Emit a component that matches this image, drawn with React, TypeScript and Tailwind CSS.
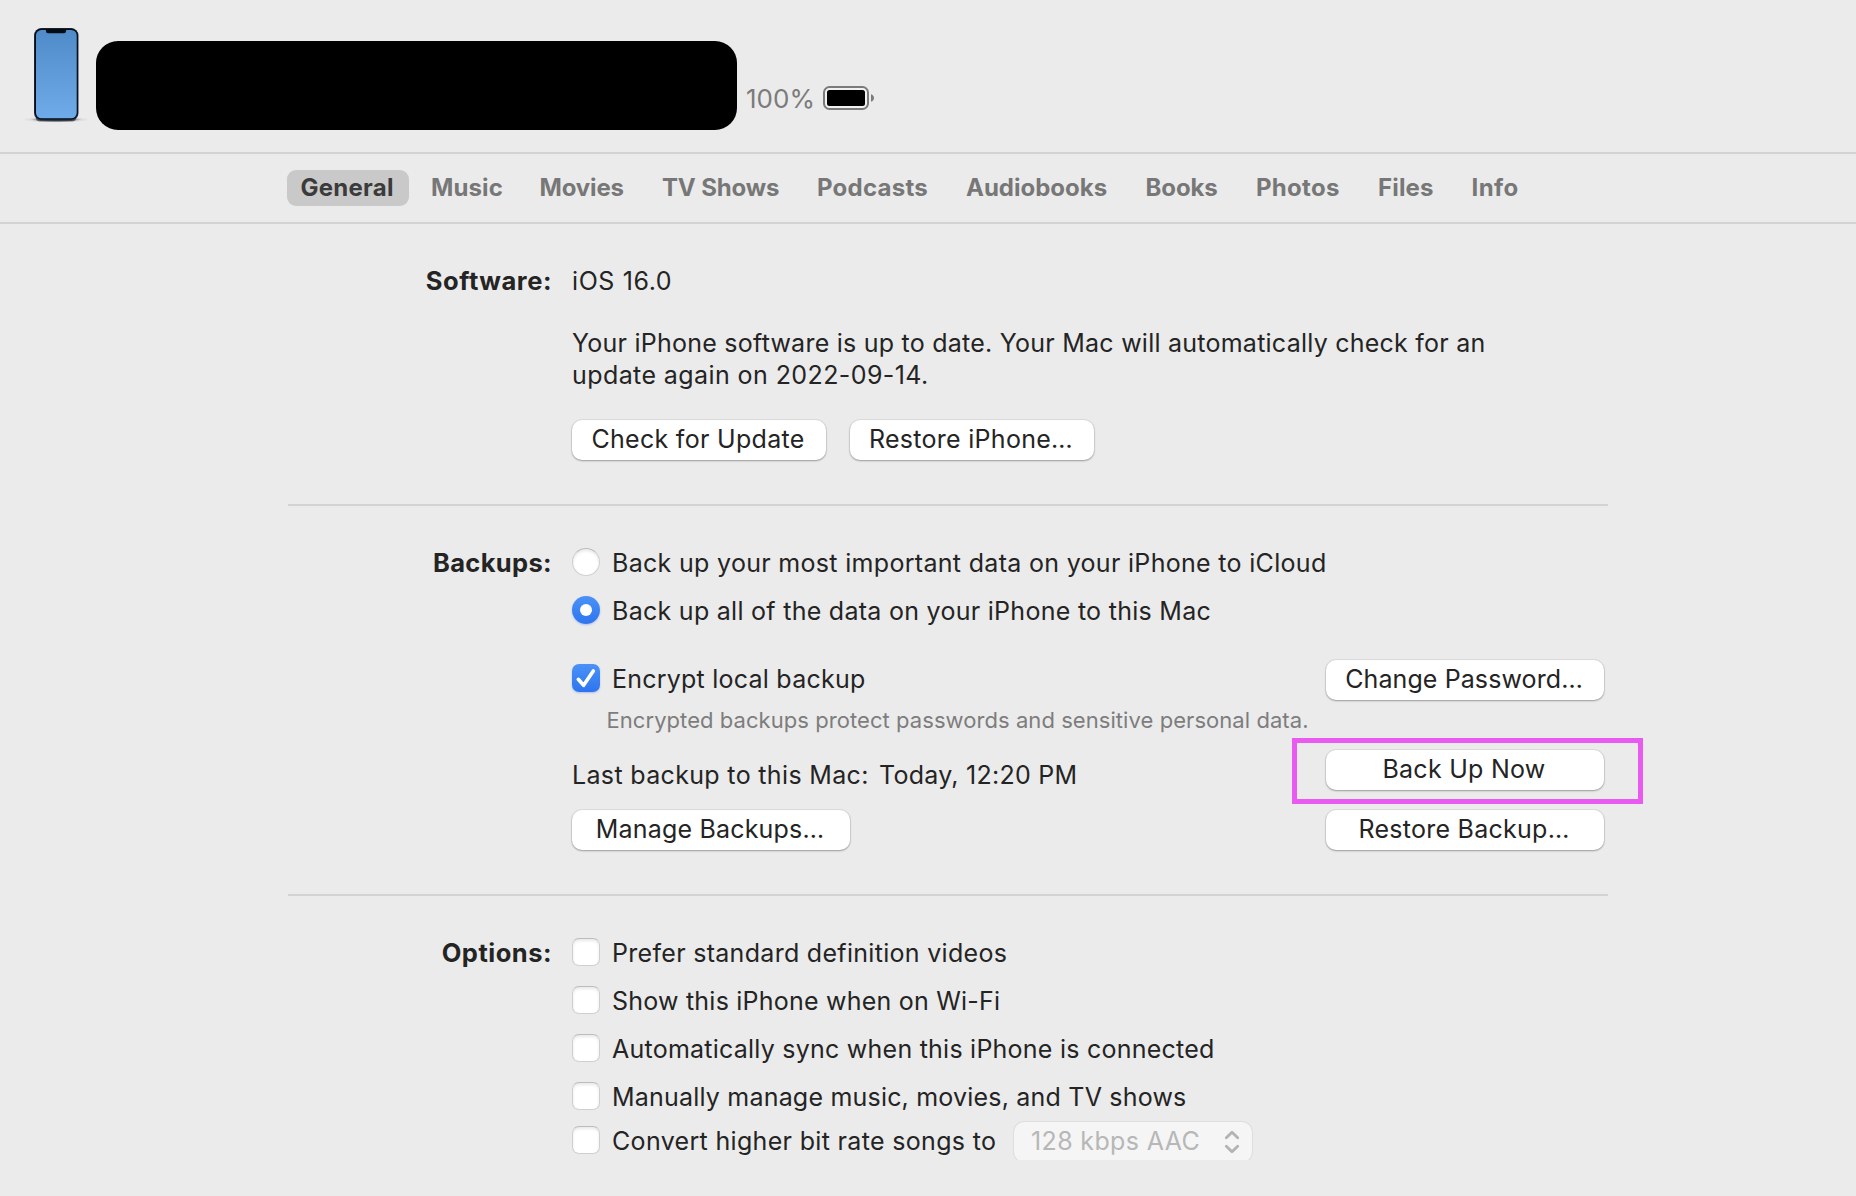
import React from "react";

const tabs = [
  { label: "General", cls: "w-[122px] pl-[13.5px] tracking-[0.25px] rounded-[9px] bg-[#c9c9c9] text-[#3b3b3b]" },
  { label: "Music", cls: "w-[98px] pl-3 tracking-[0.1px] text-[#777777]" },
  { label: "Movies", cls: "w-[113px] pl-[12.5px] tracking-[-0.15px] text-[#777777]" },
  { label: "TV Shows", cls: "w-[144px] pl-3 tracking-[-0.15px] text-[#777777]" },
  { label: "Podcasts", cls: "w-[140px] pl-[13px] tracking-[0.25px] text-[#777777]" },
  { label: "Audiobooks", cls: "w-[169.5px] pl-3 tracking-[0px] text-[#777777]" },
  { label: "Books", cls: "w-[100px] pl-3 tracking-[-0.1px] text-[#777777]" },
  { label: "Photos", cls: "w-[112px] pl-[12.5px] tracking-[0.3px] text-[#777777]" },
  { label: "Files", cls: "w-[84px] pl-[12.5px] tracking-[0.15px] text-[#777777]" },
  { label: "Info", cls: "w-[74px] pl-3 tracking-[0.4px] text-[#777777]" },
];

const options = [
  { label: "Prefer standard definition videos", cls: "tracking-[0.3px]" },
  { label: "Show this iPhone when on Wi-Fi", cls: "tracking-[0.22px]" },
  { label: "Automatically sync when this iPhone is connected", cls: "tracking-[0.238px]" },
  { label: "Manually manage music, movies, and TV shows", cls: "tracking-[0.2px]" },
];

function PushButton({ children, className }: { children: React.ReactNode; className: string }) {
  return (
    <button
      className={`flex h-10 items-center justify-center rounded-[10px] bg-white pr-[2px] pb-[2px] whitespace-nowrap shadow-[0_0_0_1px_rgba(0,0,0,0.06),0_1px_2px_rgba(0,0,0,0.3)] ${className}`}
    >
      {children}
    </button>
  );
}

function EmptyBox({ className }: { className: string }) {
  return (
    <span
      className={`mt-px size-7 shrink-0 border border-[#cfcfcf] border-t-[#bcbcbc] bg-white shadow-[inset_0_2px_3px_rgba(0,0,0,0.09)] ${className}`}
    />
  );
}

function Section({ label, labelClass, children }: { label: string; labelClass: string; children: React.ReactNode }) {
  return (
    <section className="flex">
      <h2 className={`w-[264px] shrink-0 text-right text-[25.5px] font-bold ${labelClass}`}>{label}</h2>
      <div className="ml-5 w-[1032px]">{children}</div>
    </section>
  );
}

function PhoneIcon() {
  return (
    <svg width="72" height="100" viewBox="0 0 72 100">
      <defs>
        <linearGradient id="screen" x1="0" y1="0" x2="0" y2="1">
          <stop offset="0" stopColor="#4f8bc9" />
          <stop offset="1" stopColor="#6eabe8" />
        </linearGradient>
        <radialGradient id="ground">
          <stop offset="0" stopColor="#000" stopOpacity="0.8" />
          <stop offset="0.55" stopColor="#000" stopOpacity="0.35" />
          <stop offset="0.75" stopColor="#000" stopOpacity="0.06" />
          <stop offset="1" stopColor="#000" stopOpacity="0" />
        </radialGradient>
      </defs>
      <ellipse cx="36" cy="91.5" rx="34" ry="3.2" fill="url(#ground)" />
      <rect x="16" y="86" width="40" height="7.5" rx="4" fill="#000" fillOpacity="0.45" />
      <rect x="14" y="0" width="44.500" height="92.500" rx="7.500" fill="#22394f" />
      <rect x="14.600" y="0.500" width="43.300" height="91" rx="7" fill="#050b12" />
      <rect x="16" y="2" width="40.700" height="88.300" rx="5.500" fill="url(#screen)" />
      <path d="M25 1.500h22c-1 .4-1 1-1 1.800 0 1.200-.8 2-2 2H28c-1.200 0-2-.8-2-2 0-.8 0-1.400-1-1.800z" fill="#050b12" />
    </svg>
  );
}

function BatteryIcon() {
  return (
    <svg width="52" height="26" viewBox="0 0 52 26">
      <rect x="1" y="2" width="44" height="22" rx="5.500" fill="#f1f1f1" stroke="#7b7b7b" strokeWidth="2" />
      <rect x="4" y="5" width="38" height="16" rx="2.500" fill="#000" />
      <path d="M48 9.200c1.900.6 3 2 3 3.800s-1.100 3.200-3 3.800z" fill="#7b7b7b" />
    </svg>
  );
}

export default function App() {
  return (
    <div className="h-[1196px] w-[1856px] overflow-hidden bg-[#ebebeb] font-['Inter','Liberation_Sans',sans-serif] text-[25px] leading-8 text-[#242424]">
      <header className="flex h-[154px] items-start border-b-2 border-[#d3d3d3] pl-5">
        <div className="mt-7">
          <PhoneIcon />
        </div>
        <div className="mt-[41px] ml-1 h-[89px] w-[641px] rounded-[22px] bg-black" />
        <div className="mt-[83px] ml-[9px] w-[77px] text-[26px] tracking-[0px] text-[#7b7b7b]">100%</div>
        <div className="mt-[85px]">
          <BatteryIcon />
        </div>
      </header>

      <nav className="flex h-[70px] items-start gap-[10px] border-b-2 border-[#d3d3d3] pt-4 pl-[287px]">
        {tabs.map((t) => (
          <button key={t.label} className={`flex h-9 items-center text-left text-[24px] font-bold whitespace-nowrap ${t.cls}`}>
            {t.label}
          </button>
        ))}
      </nav>

      <main className="ml-72 w-[1320px]">
        <div className="h-[282px] border-b-2 border-[#d3d3d3] pt-[41px]">
          <Section label="Software:" labelClass="tracking-[0.55px]">
            <p className="tracking-[0.6px]">iOS 16.0</p>
            <p className="mt-[30px] whitespace-nowrap">
              <span className="tracking-[0.241px]">
                Your iPhone software is up to date. Your Mac will automatically check for an
              </span>
              <br />
              <span className="tracking-[0.412px]">update again on 2022-09-14.</span>
            </p>
            <div className="mt-[29px] flex gap-6">
              <PushButton className="w-[254px] tracking-[0.3px]">Check for Update</PushButton>
              <PushButton className="w-[244px] tracking-[0.28px]">Restore iPhone…</PushButton>
            </div>
          </Section>
        </div>

        <div className="h-[390px] border-b-2 border-[#d3d3d3] pt-[41px]">
          <Section label="Backups:" labelClass="tracking-[0.35px]">
            <div className="flex gap-3">
              <EmptyBox className="rounded-full" />
              <span className="tracking-[0.31px]">Back up your most important data on your iPhone to iCloud</span>
            </div>
            <div className="mt-4 flex gap-3">
              <span className="mt-px flex size-7 items-center justify-center rounded-full bg-linear-to-b from-[#4a92f7] to-[#2f74ef] shadow-[0_1px_2px_rgba(47,116,239,0.35)]">
                <span className="size-3 rounded-full bg-white" />
              </span>
              <span className="tracking-[0.279px]">Back up all of the data on your iPhone to this Mac</span>
            </div>

            <div className="mt-[33px] flex">
              <div className="w-[754px] shrink-0 pt-[3px] whitespace-nowrap">
                <div className="flex gap-3">
                  <span className="mt-px flex size-7 items-center justify-center rounded-[7px] bg-linear-to-b from-[#4a92f7] to-[#2f74ef] shadow-[0_1px_2px_rgba(47,116,239,0.35)]">
                    <svg width="28" height="28" viewBox="0 0 28 28" fill="none">
                      <path d="M6.300 15.300l5.300 6L21.300 7" stroke="#fff" strokeWidth="3.600" strokeLinecap="round" strokeLinejoin="round" />
                    </svg>
                  </span>
                  <span className="tracking-[0.23px]">Encrypt local backup</span>
                </div>
                <p className="mt-[9px] pl-[34.5px] text-[22px] tracking-[0.06px] text-[#7d7d7d]">
                  Encrypted backups protect passwords and sensitive personal data.
                </p>
                <p className="mt-[23px] flex">
                  <span className="w-[307px] tracking-[0.34px]">Last backup to this Mac:</span>
                  <span className="tracking-[0.25px]">Today, 12:20 PM</span>
                </p>
                <PushButton className="mt-[19px] w-[278px] tracking-[0.2px]">Manage Backups…</PushButton>
              </div>
              <div className="flex w-[278px] flex-col">
                <PushButton className="tracking-[0.1px]">Change Password…</PushButton>
                <div className="relative mt-[50px]">
                  <PushButton className="w-full tracking-[0.275px]">Back Up Now</PushButton>
                  <div className="pointer-events-none absolute -top-3 -left-[34px] h-[66px] w-[351px] border-5 border-[#e95af1]" />
                </div>
                <PushButton className="mt-5 tracking-[0.26px]">Restore Backup…</PushButton>
              </div>
            </div>
          </Section>
        </div>

        <div className="pt-[41px]">
          <Section label="Options:" labelClass="tracking-[0.5px]">
            <div className="flex flex-col gap-4">
              {options.map((o) => (
                <label key={o.label} className="flex gap-3">
                  <EmptyBox className="rounded-[7px]" />
                  <span className={o.cls}>{o.label}</span>
                </label>
              ))}
            </div>
            <div className="mt-[9px] flex items-start">
              <label className="mt-[3px] flex w-[442px] gap-3">
                <EmptyBox className="rounded-[7px]" />
                <span className="tracking-[0.33px] whitespace-nowrap">Convert higher bit rate songs to</span>
              </label>
              <div className="-mx-1 -mt-1 h-[42px] overflow-hidden px-1 pt-1">
                <div className="flex h-10 w-[238px] items-center justify-between rounded-[10px] bg-[#f5f5f5] pr-[12px] pb-[2px] pl-[17px] text-[#b7b7b7] shadow-[0_0_0_1px_rgba(0,0,0,0.03),0_0_2px_rgba(0,0,0,0.08)]">
                  <span className="tracking-[0.36px]">128 kbps AAC</span>
                  <svg width="16" height="24" viewBox="0 0 16 24" fill="none" stroke="#b3b3b3" strokeWidth="2.800" strokeLinecap="round" strokeLinejoin="round" className="mt-px">
                    <path d="M2.300 7.800L8 2.200l5.700 5.600M2.300 16.200L8 21.800l5.700-5.600" />
                  </svg>
                </div>
              </div>
            </div>
          </Section>
        </div>
      </main>
    </div>
  );
}
